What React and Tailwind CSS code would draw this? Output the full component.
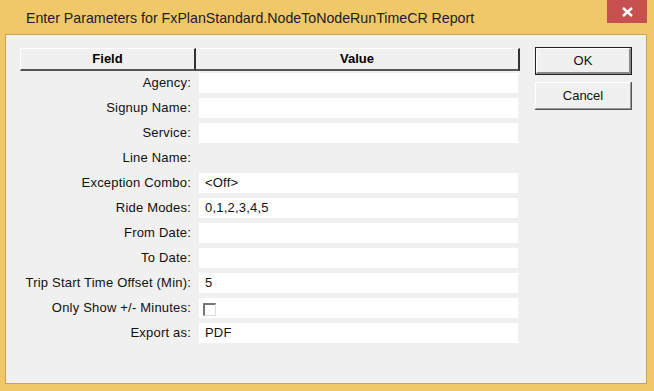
export default function App() {
  const rows = [
    ["Agency:", ""],
    ["Signup Name:", ""],
    ["Service:", ""],
    ["Line Name:", null],
    ["Exception Combo:", "<Off>"],
    ["Ride Modes:", "0,1,2,3,4,5"],
    ["From Date:", ""],
    ["To Date:", ""],
    ["Trip Start Time Offset (Min):", "5"],
    ["Only Show +/- Minutes:", "checkbox"],
    ["Export as:", "PDF"],
  ];
  const ui = { fontFamily: '"Liberation Sans", Arial, sans-serif' };
  return (
    <div className="w-[654px] h-[391px] bg-[#f0c86a] flex flex-col overflow-hidden" style={ui}>
      <div className="h-[34px] flex shrink-0">
        <div className="flex-1 pl-[26px] pt-[8px] text-[14.2px] text-[#202020]">
          Enter Parameters for FxPlanStandard.NodeToNodeRunTimeCR Report
        </div>
        <div className="w-[40px] h-[23px] mr-[7px] bg-[#c75050] flex items-center justify-center">
          <svg width="11" height="10" viewBox="0 0 11 10">
            <path d="M1 1 L10 9 M10 1 L1 9" stroke="#fff" strokeWidth="2.4" />
          </svg>
        </div>
      </div>
      <div className="ml-[5px] mr-[7px] mb-[7px] flex-1 border border-[#c9a455] bg-[#f0f0f0] flex">
        <div className="ml-[14px] mt-[13px] w-[500px] flex flex-col">
          <div className="flex h-[23px] text-[13px] font-bold text-[#000]">
            <div className="w-[176px] flex items-center justify-center border-t border-l border-white border-b-2 border-b-[#555] border-r-2 border-r-[#333] bg-[#f0f0f0]">
              Field
            </div>
            <div className="flex-1 flex items-center justify-center border-t border-white border-b-2 border-b-[#555] border-r-2 border-r-[#333] bg-[#f0f0f0]">
              Value
            </div>
          </div>
          <div className="flex flex-col gap-[5px] mt-[2px]">
            {rows.map(([label, val]) => (
              <div key={label} className="flex h-[20px] text-[13px] tracking-[0.2px] text-[#111]">
                <div className="w-[171px] text-right leading-[20px] whitespace-nowrap">{label}</div>
                <div className="w-[8px]" />
                {val === null ? (
                  <div className="flex-1" />
                ) : (
                  <div className="w-[319px] bg-white flex items-center pl-[6px] leading-[20px]">
                    {val === "checkbox" ? (
                      <div className="w-[13px] h-[13px] mt-[3px] -ml-[2px] border-t-2 border-l-2 border-t-[#777] border-l-[#777] border-r border-b border-r-[#ddd] border-b-[#ddd] bg-white" />
                    ) : (
                      val
                    )}
                  </div>
                )}
              </div>
            ))}
          </div>
        </div>
        <div className="ml-[15px] mt-[12px] flex flex-col gap-[7px]">
          <div className="w-[97px] h-[28px] border border-[#222] bg-[#f0f0f0]">
            <div className="w-full h-full border-t border-l border-white border-b-2 border-r-2 border-b-[#888] border-r-[#888] flex items-center justify-center text-[13px] text-[#111]">
              OK
            </div>
          </div>
          <div className="w-[97px] h-[28px] border-b border-r border-[#555] bg-[#f0f0f0]">
            <div className="w-full h-full border-t border-l border-white border-b border-r border-b-[#999] border-r-[#999] flex items-center justify-center text-[13px] text-[#111]">
              Cancel
            </div>
          </div>
        </div>
      </div>
    </div>
  );
}
